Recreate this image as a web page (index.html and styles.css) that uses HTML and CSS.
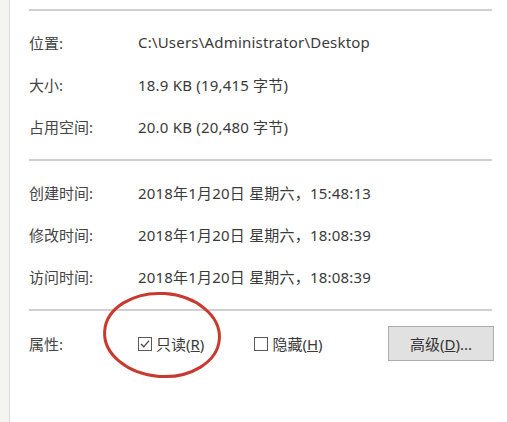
FILE: index.html
```html
<!DOCTYPE html>
<html lang="zh-CN">
<head>
    <meta charset="UTF-8">
    <title>属性</title>
    <link rel="stylesheet" href="styles.css">
</head>
<body>
    <div class="window">
        <div class="sep"></div>
        <div class="group">
            <div class="row"><span class="row__label">位置:</span><span class="row__value">C:\Users\Administrator\Desktop</span></div>
            <div class="row"><span class="row__label">大小:</span><span class="row__value">18.9 KB (19,415 字节)</span></div>
            <div class="row"><span class="row__label">占用空间:</span><span class="row__value">20.0 KB (20,480 字节)</span></div>
        </div>
        <div class="sep"></div>
        <div class="group">
            <div class="row"><span class="row__label">创建时间:</span><span class="row__value">2018年1月20日 星期六，15:48:13</span></div>
            <div class="row"><span class="row__label">修改时间:</span><span class="row__value">2018年1月20日 星期六，18:08:39</span></div>
            <div class="row"><span class="row__label">访问时间:</span><span class="row__value">2018年1月20日 星期六，18:08:39</span></div>
        </div>
        <div class="sep"></div>
        <div class="attrs">
            <span class="row__label attrs__label">属性:</span>
            <label class="check">
                <span class="check__box">
                    <svg width="12" height="12" viewBox="0 0 12 12"><path d="M2 6 L4.8 8.8 L10 2.7" fill="none" stroke="#444" stroke-width="1.3"/></svg>
                </span>
                <span>只读(<u>R</u>)</span>
            </label>
            <label class="check check--second">
                <span class="check__box"></span>
                <span>隐藏(<u>H</u>)</span>
            </label>
            <button class="btn" type="button">高级(<u>D</u>)...</button>
        </div>
        <svg class="circle" width="124" height="92" viewBox="0 0 124 92">
            <ellipse cx="62" cy="46" rx="57.5" ry="41.5" fill="none" stroke="#c83a2f" stroke-width="3" transform="rotate(4 62 46)"/>
        </svg>
    </div>
</body>
</html>
```

FILE: styles.css
```css
html, body{
    margin: 0;
    height: 100%;
}
body{
    background: #f4f4f1;
    font-family: "Noto Sans", "Noto Sans CJK SC", sans-serif;
    font-size: 15px;
    color: #3a3a3a;
}
.window{
    position: relative;
    margin-left: 9px;
    height: 100%;
    box-sizing: border-box;
    border-left: 1px solid #dcdcdc;
    background: #fff;
    padding: 9px 15px 0 19px;
}
.sep{
    height: 2px;
    background: #d0d0d0;
}
.group{
    padding: 10px 0 12px;
}
.row{
    display: flex;
    align-items: center;
    height: 42px;
}
.row__label{
    width: 109px;
    flex: none;
    color: #444;
}
.row__value{
    letter-spacing: 0.2px;
}
.attrs{
    display: flex;
    align-items: center;
    padding-top: 15px;
}
.check{
    display: flex;
    align-items: center;
    gap: 4px;
}
.check--second{
    margin-left: 50px;
}
.check__box{
    width: 14px;
    height: 14px;
    box-sizing: border-box;
    border: 1px solid #5a5a5a;
    display: flex;
    align-items: center;
    justify-content: center;
}
.btn{
    margin-left: auto;
    margin-right: -2px;
    width: 106px;
    height: 35px;
    background: #e1e1e1;
    border: 1px solid #adadad;
    font-family: inherit;
    font-size: 15px;
    color: #333;
}
.circle{
    position: absolute;
    left: 90px;
    top: 289px;
}
```
